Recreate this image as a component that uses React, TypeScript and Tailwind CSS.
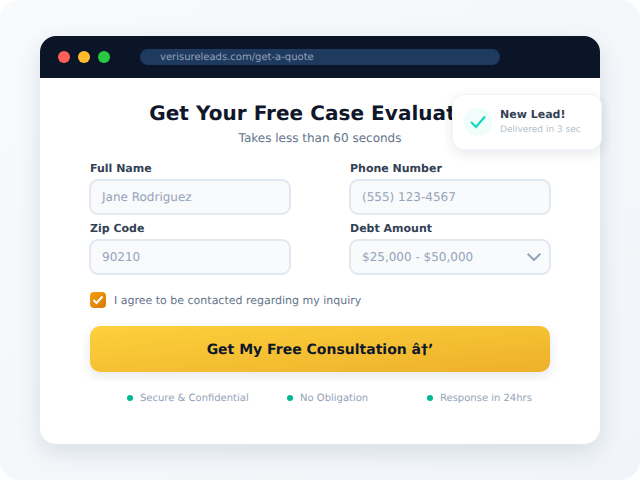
import React from "react";

const fields = [
  { label: "Full Name", value: "Jane Rodriguez" },
  { label: "Phone Number", value: "(555) 123-4567" },
  { label: "Zip Code", value: "90210" },
  { label: "Debt Amount", value: "$25,000 - $50,000", select: true },
];

const trust = [
  { text: "Secure & Confidential", width: "w-[160px]" },
  { text: "No Obligation", width: "w-[140px]" },
  { text: "Response in 24hrs", width: "w-[110px]" },
];

const App: React.FC = () => {
  return (
    <div className="w-[640px] h-[480px] overflow-hidden bg-white font-['DejaVu_Sans',sans-serif] [text-rendering:geometricPrecision]">
      <div className="relative w-full h-full rounded-[20px] bg-gradient-to-br from-[#f8fafc] to-[#f1f5f9] px-10 pt-9">
        {/* Browser window */}
        <div className="h-[408px] rounded-2xl bg-white shadow-[0_8px_24px_rgba(15,40,80,0.12)] overflow-hidden">
          <div className="h-[42px] bg-[#0a1628] flex items-center pl-[18px]">
            <div className="flex gap-2">
              <span className="w-3 h-3 rounded-full bg-[#ff5f57]"></span>
              <span className="w-3 h-3 rounded-full bg-[#ffbd2e]"></span>
              <span className="w-3 h-3 rounded-full bg-[#28ca42]"></span>
            </div>
            <div className="ml-[30px] w-[360px] h-4 rounded-lg bg-[#1e3a5f] pl-5 flex items-center text-[10px] text-[#94a3b8]">
              verisureleads.com/get-a-quote
            </div>
          </div>

          <div className="px-[49px] pt-[23px]">
            <h1 className="text-[20px] leading-6 font-bold text-[#0f172a] text-center tracking-[0.05px]">Get Your Free Case Evaluation</h1>
            <p className="mt-[5px] text-xs leading-4 text-[#64748b] text-center">Takes less than 60 seconds</p>

            <div className="mt-4 grid grid-cols-[202px_202px] gap-x-[58px] gap-y-[7px]">
              {fields.map((f) => (
                <div key={f.label}>
                  <div className="pl-px text-[11px] leading-[14px] font-bold text-[#334155]">{f.label}</div>
                  <div className="mt-[3px] h-9 rounded-[9px] border-2 border-[#e2e8f0] bg-[#f8fafc] pl-[11px] pr-2 flex items-center justify-between text-xs text-[#94a3b8]">
                    <span>{f.value}</span>
                    {f.select && (
                      <svg width="14" height="8" viewBox="0 0 14 8" fill="none" stroke="#94a3b8" strokeWidth="2">
                        <path d="M0.7 0.7 L7 7 L13.3 0.7" />
                      </svg>
                    )}
                  </div>
                </div>
              ))}
            </div>

            <div className="mt-[17px] h-4 pl-px flex items-start gap-2">
              <span className="w-4 h-4 rounded-[4px] bg-gradient-to-br from-[#f59e0b] to-[#d97706] flex items-center justify-center">
                <svg width="12" height="10" viewBox="0 0 12 10" fill="none" stroke="white" strokeWidth="2">
                  <path d="M1.5 5 L4.5 8 L10.5 1.5" />
                </svg>
              </span>
              <span className="text-[11px] leading-[18px] text-[#64748b]">I agree to be contacted regarding my inquiry</span>
            </div>

            <div className="mt-[10px] -mx-2 pl-[9px] pr-[9px] pt-2 pb-[9px] overflow-hidden">
              <div className="h-[46px] pt-0.5 rounded-[10px] bg-gradient-to-br from-[#fdd13c] to-[#edb02a] shadow-[0_4px_12px_rgba(15,23,42,0.1)] flex items-center justify-center text-sm font-bold text-[#0f172a]">
                Get My Free Consultation â†’
              </div>
            </div>

            <div className="mt-[9px] flex pl-[38px]">
              {trust.map((t) => (
                <div key={t.text} className={`${t.width} flex items-start gap-[7px] text-[10px] leading-[18px] text-[#94a3b8]`}>
                  <span className="mt-[5px] w-[6px] h-[6px] rounded-full bg-[#00b894]"></span>
                  {t.text}
                </div>
              ))}
            </div>
          </div>
        </div>

        {/* New lead toast */}
        <div className="absolute left-[444px] top-[86px] w-[170px] h-[76px] overflow-hidden">
          <div className="ml-2 mt-2 w-[150px] h-[56px] rounded-xl border border-[#f1f5f9] bg-white shadow-[0_4px_12px_rgba(15,40,80,0.1)] flex items-center pl-[11px]">
            <span className="w-7 h-7 rounded-full bg-[#f0fdfa] flex items-center justify-center shrink-0">
              <svg width="16" height="14" viewBox="0 0 16 14" fill="none" stroke="#14d8c0" strokeWidth="2.2">
                <path d="M1 7 L6 12 L15 1.5" />
              </svg>
            </span>
            <div className="ml-[8px]">
              <div className="text-[11px] leading-[14px] font-bold text-[#334155]">New Lead!</div>
              <div className="mt-[2px] text-[9px] leading-3 text-[#b4bfcc]">Delivered in 3 sec</div>
            </div>
          </div>
        </div>
      </div>
    </div>
  );
};

export default App;
